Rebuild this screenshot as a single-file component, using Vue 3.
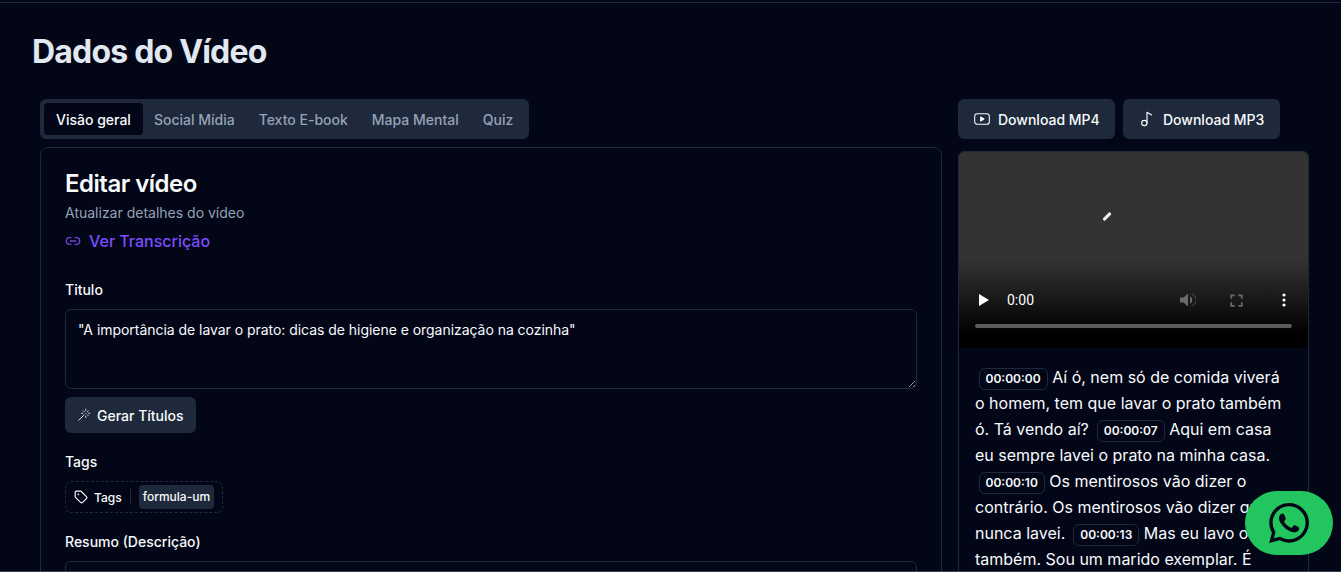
<template>
  <div class="page">
    <div class="topbar"></div>
    <main class="content">
      <h1 class="page-title">Dados do Vídeo</h1>
      <div class="columns">
        <section class="left">
          <div class="tabs">
            <button
              v-for="(tab, index) in tabs"
              :key="tab"
              class="tab"
              :class="{ active: index === 0 }"
            >
              {{ tab }}
            </button>
          </div>

          <div class="card">
            <h2 class="card-title">Editar vídeo</h2>
            <p class="card-sub">Atualizar detalhes do vídeo</p>
            <a class="transcript-link">
              <svg class="icon link-icon" viewBox="0 0 24 24" fill="none" stroke="currentColor" stroke-width="2" stroke-linecap="round" stroke-linejoin="round">
                <path d="M9 17H7A5 5 0 0 1 7 7h2" />
                <path d="M15 7h2a5 5 0 1 1 0 10h-2" />
                <line x1="8" x2="16" y1="12" y2="12" />
              </svg>
              Ver Transcrição
            </a>

            <label class="label title-label">Titulo</label>
            <textarea class="input" v-model="title"></textarea>

            <button class="gen-button">
              <svg class="wand" viewBox="0 0 24 24" fill="none" stroke="currentColor" stroke-width="1.5" stroke-linecap="round" stroke-linejoin="round">
                <path d="M15 4V2" /><path d="M15 16v-2" /><path d="M8 9h2" /><path d="M20 9h2" />
                <path d="M17.8 11.8 19 13" /><path d="M15 9h.01" /><path d="M17.8 6.2 19 5" />
                <path d="m3 21 9-9" /><path d="M12.2 6.2 11 5" />
              </svg>
              <span class="btn-text">Gerar Títulos</span>
            </button>

            <label class="label tags-label">Tags</label>
            <div class="tags-box">
              <svg class="icon" viewBox="0 0 24 24" fill="none" stroke="currentColor" stroke-width="2" stroke-linecap="round" stroke-linejoin="round">
                <path d="M12.586 2.586A2 2 0 0 0 11.172 2H4a2 2 0 0 0-2 2v7.172a2 2 0 0 0 .586 1.414l8.704 8.704a2.426 2.426 0 0 0 3.42 0l6.58-6.58a2.426 2.426 0 0 0 0-3.42z" />
                <circle cx="7.5" cy="7.5" r=".5" fill="currentColor" />
              </svg>
              <span>Tags</span>
              <span class="tags-sep"></span>
              <span class="chip">formula-um</span>
            </div>

            <label class="label resumo-label">Resumo (Descrição)</label>
            <textarea class="input"></textarea>
          </div>
        </section>

        <aside class="right">
          <div class="downloads">
            <button class="download">
              <svg class="icon" viewBox="0 0 24 24" fill="none" stroke="currentColor" stroke-width="1.6" stroke-linecap="round" stroke-linejoin="round">
                <rect x="1" y="4" width="22" height="16" rx="4" />
                <path d="m10 9 5 3-5 3z" fill="currentColor" />
              </svg>
              <span class="btn-text">Download MP4</span>
            </button>
            <button class="download">
              <svg class="icon" viewBox="0 0 24 24" fill="none" stroke="currentColor" stroke-width="1.7" stroke-linecap="round" stroke-linejoin="round">
                <circle cx="8" cy="18" r="4" />
                <path d="M12 18V2l7 4" />
              </svg>
              <span class="btn-text">Download MP3</span>
            </button>
          </div>

          <div class="player">
            <div class="video">
              <span class="spinner-mark"></span>
              <div class="controls">
                <svg class="play" viewBox="0 0 10 12"><path d="M0 0l10 6-10 6z" fill="#fff" /></svg>
                <span class="time">0:00</span>
                <svg class="ctl volume" viewBox="0 0 16 14">
                  <path d="M0 4.5h3.5L8 .5v13L3.5 9.5H0z" />
                  <path d="M10 3.2c1.4.8 2.2 2.2 2.2 3.8s-.8 3-2.2 3.8z" />
                  <path d="M11.5.8C14 1.8 16 4.2 16 7s-2 5.2-4.5 6.2" fill="none" stroke="#6a6a6a" stroke-opacity=".45" stroke-width="1.4" />
                </svg>
                <svg class="ctl full" viewBox="0 0 24 24"><path d="M7 14H5v5h5v-2H7v-3zm-2-4h2V7h3V5H5v5zm12 7h-3v2h5v-5h-2v3zM14 5v2h3v3h2V5h-5z" /></svg>
                <svg class="ctl dots" viewBox="0 0 4 14"><circle cx="2" cy="2" r="1.6" /><circle cx="2" cy="7" r="1.6" /><circle cx="2" cy="12" r="1.6" /></svg>
              </div>
              <div class="timeline"></div>
            </div>
            <div class="transcript">
              <template v-for="part in transcript" :key="part.time">
                <span class="stamp">{{ part.time }}</span>{{ ' ' + part.text + ' ' }}
              </template>
            </div>
          </div>
        </aside>
      </div>
    </main>

    <button class="whatsapp" aria-label="WhatsApp">
      <svg viewBox="0 0 24 24" width="40" height="40" fill="#020617">
        <path d="M17.472 14.382c-.297-.149-1.758-.867-2.03-.967-.273-.099-.471-.148-.67.15-.197.297-.767.966-.94 1.164-.173.199-.347.223-.644.075-.297-.15-1.255-.463-2.39-1.475-.883-.788-1.48-1.761-1.653-2.059-.173-.297-.018-.458.13-.606.134-.133.298-.347.446-.52.149-.174.198-.298.298-.497.099-.198.05-.371-.025-.52-.075-.149-.669-1.612-.916-2.207-.242-.579-.487-.5-.669-.51-.173-.008-.371-.01-.57-.01-.198 0-.52.074-.792.372-.272.297-1.04 1.016-1.04 2.479 0 1.462 1.065 2.875 1.213 3.074.149.198 2.096 3.2 5.077 4.487.709.306 1.262.489 1.694.625.712.227 1.36.195 1.871.118.571-.085 1.758-.719 2.006-1.413.248-.694.248-1.289.173-1.413-.074-.124-.272-.198-.57-.347m-5.421 7.403h-.004a9.87 9.87 0 01-5.031-1.378l-.361-.214-3.741.982.998-3.648-.235-.374a9.86 9.86 0 01-1.51-5.26c.001-5.45 4.436-9.884 9.888-9.884 2.64 0 5.122 1.03 6.988 2.898a9.825 9.825 0 012.893 6.994c-.003 5.45-4.437 9.884-9.885 9.884m8.413-18.297A11.815 11.815 0 0012.05 0C5.495 0 .16 5.335.157 11.892c0 2.096.547 4.142 1.588 5.945L.057 24l6.305-1.654a11.882 11.882 0 005.683 1.448h.005c6.554 0 11.89-5.335 11.893-11.893a11.821 11.821 0 00-3.48-8.413z" />
      </svg>
    </button>
    <div class="bottom-line"></div>
  </div>
</template>

<script setup>
import { ref } from 'vue'

const tabs = ['Visão geral', 'Social Mídia', 'Texto E-book', 'Mapa Mental', 'Quiz']

const title = ref('"A importância de lavar o prato: dicas de higiene e organização na cozinha"')

const transcript = [
  { time: '00:00:00', text: 'Aí ó, nem só de comida viverá o homem, tem que lavar o prato também ó. Tá vendo aí?' },
  { time: '00:00:07', text: 'Aqui em casa eu sempre lavei o prato na minha casa.' },
  { time: '00:00:10', text: 'Os mentirosos vão dizer o contrário. Os mentirosos vão dizer que nunca lavei.' },
  { time: '00:00:13', text: 'Mas eu lavo o meu também. Sou um marido exemplar. É' }
]
</script>

<style scoped>
.page {
  position: relative;
  height: 572px;
  overflow: hidden;
  background: #020617;
  color: #f8fafc;
  font-family: Inter, "Liberation Sans", sans-serif;
}

.topbar {
  height: 2px;
  border-bottom: 1px solid #1e293b;
}

.content {
  padding: 31px 32px 0;
}

.page-title {
  margin: 0 0 29px;
  font-size: 32px;
  line-height: 36px;
  font-weight: 700;
  letter-spacing: -0.8px;
  color: #e2e8f0;
}

.columns {
  display: grid;
  grid-template-columns: 902px 351px;
  gap: 16px;
  padding-left: 8px;
}

.tabs {
  display: inline-flex;
  height: 40px;
  box-sizing: border-box;
  padding: 4px;
  background: #1e293b;
  border-radius: 6px;
  vertical-align: top;
}

.tab {
  padding: 2px 12px 0;
  border: none;
  border-radius: 4px;
  background: transparent;
  color: #94a3b8;
  font: 500 14px/20px Inter, sans-serif;
}

.tab.active {
  margin-right: -1px;
  background: #020617;
  color: #f8fafc;
}

.card {
  margin-top: 8px;
  padding: 24px;
  border: 1px solid #1e293b;
  border-radius: 8px;
}

.card-title {
  margin: 0;
  font-size: 24px;
  line-height: 24px;
  font-weight: 600;
  letter-spacing: -0.5px;
}

.card-sub {
  margin: 7px 0 0;
  font-size: 14px;
  line-height: 20px;
  color: #94a3b8;
}

.transcript-link {
  display: flex;
  align-items: center;
  gap: 8px;
  margin-top: 6px;
  font-size: 16px;
  line-height: 24px;
  font-weight: 500;
  color: #7c4dff;
}

.link-icon {
  color: #6d45d8;
}

.icon {
  width: 16px;
  height: 16px;
  flex: none;
}

.label {
  display: block;
  font-size: 14px;
  line-height: 20px;
  font-weight: 500;
}

.title-label {
  margin-top: 27px;
  margin-bottom: 9px;
}

.input {
  display: block;
  box-sizing: border-box;
  width: 100%;
  height: 80px;
  padding: 10px 12px;
  border: 1px solid #1e293b;
  border-radius: 6px;
  background: transparent;
  color: #f8fafc;
  font: 400 14px/20px Inter, sans-serif;
  letter-spacing: -0.04px;
}

.gen-button {
  display: flex;
  align-items: center;
  height: 36px;
  margin-top: 8px;
  padding: 0 12px;
  border: none;
  border-radius: 6px;
  background: #1e293b;
  color: #f8fafc;
  font: 500 14px/20px Inter, sans-serif;
}

.wand {
  width: 14px;
  height: 14px;
  margin-right: 6px;
  flex: none;
}

.btn-text {
  padding-top: 2px;
}

.tags-label {
  margin-top: 19px;
  margin-bottom: 9px;
}

.tags-box {
  display: inline-flex;
  align-items: center;
  box-sizing: border-box;
  height: 32px;
  padding: 0 8px;
  border: 1px dashed #1e293b;
  border-radius: 6px;
  font-size: 12px;
  font-weight: 500;
  vertical-align: top;
}

.tags-box .icon {
  width: 14px;
  height: 14px;
  margin-right: 6px;
}

.tags-sep {
  width: 1px;
  height: 16px;
  margin: 0 8px;
  background: #1e293b;
}

.chip {
  padding: 4px;
  border-radius: 4px;
  background: #1e293b;
  line-height: 16px;
}

.resumo-label {
  margin-top: 19px;
  margin-bottom: 9px;
}

.downloads {
  display: flex;
  gap: 8px;
  margin-bottom: 12px;
}

.download {
  display: flex;
  align-items: center;
  gap: 8px;
  width: 157px;
  height: 40px;
  padding: 0 0 0 16px;
  border: none;
  border-radius: 6px;
  background: #1e293b;
  color: #f8fafc;
  font: 500 14px/20px Inter, sans-serif;
}

.player {
  border: 1px solid #1e293b;
  border-radius: 6px 6px 0 0;
  overflow: hidden;
}

.video {
  position: relative;
  display: flex;
  flex-direction: column;
  justify-content: flex-end;
  height: 196px;
  padding: 0 16px 20px;
  box-sizing: border-box;
  background: linear-gradient(#333 0, #333 55%, #000 93%);
}

.spinner-mark {
  position: absolute;
  left: 143px;
  top: 63px;
  width: 10px;
  height: 3px;
  border-radius: 1px;
  background: #eee;
  transform: rotate(-45deg);
}

.controls {
  display: flex;
  align-items: center;
  height: 24px;
}

.play {
  width: 10px;
  height: 12px;
  margin-left: 4px;
}

.time {
  margin-left: 18px;
  font: 400 14px/20px Roboto, sans-serif;
  color: #fff;
}

.ctl {
  fill: #6a6a6a;
}

.volume {
  width: 16px;
  height: 14px;
  margin-left: auto;
  margin-right: 30px;
}

.full {
  width: 21px;
  height: 21px;
  margin-right: 35px;
}

.dots {
  width: 4px;
  height: 14px;
  margin-right: 6px;
  fill: #fff;
}

.timeline {
  height: 4px;
  margin-top: 12px;
  border-radius: 2px;
  background: #5c5c5c;
}

.transcript {
  padding: 16px;
  font-size: 16px;
  line-height: 26px;
  color: #f8fafc;
}

.stamp {
  display: inline-block;
  box-sizing: border-box;
  height: 22px;
  margin-left: 3.5px;
  padding: 0 6px;
  border: 1px solid #1e293b;
  border-radius: 6px;
  font-size: 12px;
  line-height: 20px;
  font-weight: 600;
}

.whatsapp {
  position: absolute;
  left: 1245px;
  top: 491px;
  display: flex;
  align-items: center;
  justify-content: center;
  width: 88px;
  height: 64px;
  padding: 0;
  border: none;
  border-radius: 32px;
  background: #22c55e;
}

.bottom-line {
  position: absolute;
  left: 0;
  right: 0;
  bottom: 0;
  height: 1px;
  background: #334155;
}
</style>

<style>
html,
body {
  margin: 0;
  overflow: hidden;
  background: #020617;
}
</style>
